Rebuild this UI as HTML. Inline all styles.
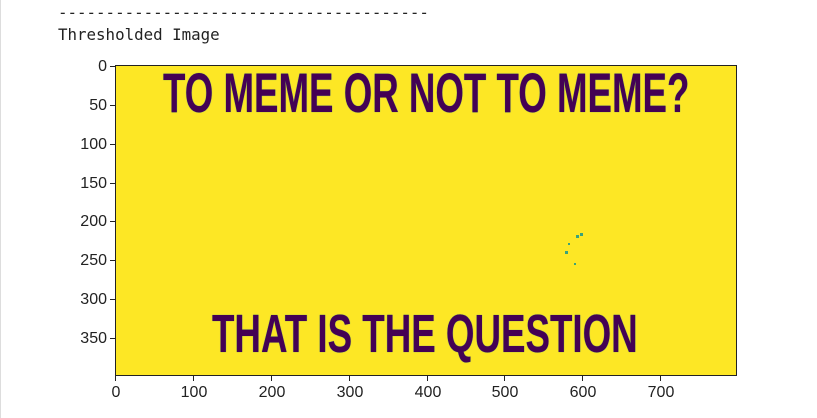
<!DOCTYPE html>
<html><head><style>
body{margin:0;width:817px;height:418px;background:#fff;position:relative;overflow:hidden;font-family:"Liberation Sans",sans-serif}
.mono{position:absolute;left:58px;font-family:"DejaVu Sans Mono","Liberation Mono",monospace;font-size:15.8px;color:#222;white-space:pre}
.plot{position:absolute;left:115px;top:65px;width:622px;height:311px;background:#fde725;border:1px solid #222;box-sizing:border-box;overflow:hidden}
.mt{position:absolute;font-family:"Liberation Sans",sans-serif;font-weight:bold;color:#440154;white-space:nowrap;transform-origin:0 0;text-shadow:0 0 1px #21918c;letter-spacing:0}
.yl{position:absolute;right:710px;font-size:16px;color:#222;text-align:right}
.xl{position:absolute;top:384px;font-size:16px;color:#222;transform:translateX(-50%)}
.yt{position:absolute;left:110px;width:5px;height:1px;background:#222}
.xt{position:absolute;top:376px;width:1px;height:5px;background:#222}
.dot{position:absolute;width:3px;height:3px;background:#3aa37a}
</style></head><body>
<div style="position:absolute;left:0;top:0;width:1px;height:418px;background:#ddd"></div>
<div class="mono" style="top:3px">---------------------------------------</div>
<div class="mono" style="top:25px">Thresholded Image</div>
<div class="plot">
<div class="mt" style="left:47px;top:-6px;font-size:56px;transform:scaleX(0.655)">TO MEME OR NOT TO MEME?</div>
<div class="mt" style="left:96px;top:237px;font-size:54px;transform:scaleX(0.68)">THAT IS THE QUESTION</div>
<div class="dot" style="left:460px;top:169px"></div>
<div class="dot" style="left:464px;top:167px"></div>
<div class="dot" style="left:449px;top:185px"></div>
<div class="dot" style="left:452px;top:177px;width:2px;height:2px"></div>
<div class="dot" style="left:458px;top:197px;width:2px;height:2px"></div>
</div>
<div class="yt" style="top:66px"></div><div class="yl" style="top:58px">0</div>
<div class="yt" style="top:105px"></div><div class="yl" style="top:97px">50</div>
<div class="yt" style="top:144px"></div><div class="yl" style="top:136px">100</div>
<div class="yt" style="top:183px"></div><div class="yl" style="top:175px">150</div>
<div class="yt" style="top:221px"></div><div class="yl" style="top:213px">200</div>
<div class="yt" style="top:260px"></div><div class="yl" style="top:252px">250</div>
<div class="yt" style="top:299px"></div><div class="yl" style="top:291px">300</div>
<div class="yt" style="top:338px"></div><div class="yl" style="top:330px">350</div>
<div class="xt" style="left:115px"></div><div class="xl" style="left:116px">0</div>
<div class="xt" style="left:193px"></div><div class="xl" style="left:194px">100</div>
<div class="xt" style="left:271px"></div><div class="xl" style="left:272px">200</div>
<div class="xt" style="left:349px"></div><div class="xl" style="left:350px">300</div>
<div class="xt" style="left:427px"></div><div class="xl" style="left:428px">400</div>
<div class="xt" style="left:504px"></div><div class="xl" style="left:505px">500</div>
<div class="xt" style="left:582px"></div><div class="xl" style="left:583px">600</div>
<div class="xt" style="left:660px"></div><div class="xl" style="left:661px">700</div>
</body></html>
